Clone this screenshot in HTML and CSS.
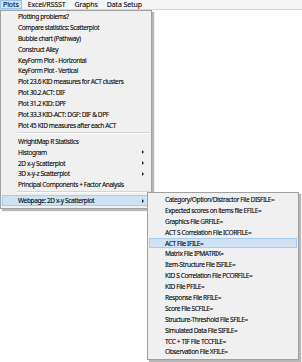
FILE: index.html
```html
<!DOCTYPE html>
<html>
<head>
<meta charset="utf-8">
<link rel="stylesheet" href="styles.css">
</head>
<body>
<div class="menubar">
  <span class="top active">Plots</span>
  <span class="top">Excel/RSSST</span>
  <span class="top">Graphs</span>
  <span class="top">Data Setup</span>
</div>
<div class="menu main">
  <div class="item">Plotting problems?</div>
  <div class="item">Compare statistics: Scatterplot</div>
  <div class="item">Bubble chart (Pathway)</div>
  <div class="item">Construct Alley</div>
  <div class="item">KeyForm Plot - Horizontal</div>
  <div class="item">KeyForm Plot - Vertical</div>
  <div class="item">Plot 23.6 KID measures for ACT clusters</div>
  <div class="item">Plot 30.2 ACT: DIF</div>
  <div class="item">Plot 31.2 KID: DPF</div>
  <div class="item">Plot 33.3 KID-ACT: DGF: DIF &amp; DPF</div>
  <div class="item">Plot 45 KID measures after each ACT</div>
  <div class="sep"></div>
  <div class="item">WrightMap R Statistics</div>
  <div class="item sub">Histogram</div>
  <div class="item sub">2D x-y Scatterplot</div>
  <div class="item sub">3D x-y-z Scatterplot</div>
  <div class="item">Principal Components + Factor Analysis</div>
  <div class="sep"></div>
  <div class="item sub hl">Webpage: 2D x-y Scatterplot</div>
</div>
<div class="menu submenu">
  <div class="item">Category/Option/Distractor File DISFILE=</div>
  <div class="item">Expected scores on items file EFILE=</div>
  <div class="item">Graphics File GRFILE=</div>
  <div class="item">ACT S Correlation File ICORFILE=</div>
  <div class="item hl">ACT File IFILE=</div>
  <div class="item">Matrix File IPMATRIX=</div>
  <div class="item">Item-Structure File ISFILE=</div>
  <div class="item">KID S Correlation File PCORFILE=</div>
  <div class="item">KID File PFILE=</div>
  <div class="item">Response File RFILE=</div>
  <div class="item">Score File SCFILE=</div>
  <div class="item">Structure-Threshold File SFILE=</div>
  <div class="item">Simulated Data File SIFILE=</div>
  <div class="item">TCC + TIF File TCCFILE=</div>
  <div class="item">Observation File XFILE=</div>
</div>
</body>
</html>
```
FILE: styles.css
```css
html, body {
  margin: 0;
  padding: 0;
  background: #ffffff;
}
body {
  font-family: "Noto Sans", "Open Sans", sans-serif;
  font-size: 6.6px;
  letter-spacing: -0.42px;
  color: #000;
  width: 302px;
  height: 362px;
  position: relative;
  overflow: hidden;
  -webkit-text-stroke: 0.08px #000;
}
.menubar {
  height: 9px;
  background: #f4f5f7;
  border-bottom: 1px solid #d4d4d4;
  display: flex;
  align-items: stretch;
  font-size: 7px;
  letter-spacing: -0.1px;
}
.top {
  display: flex;
  align-items: center;
  padding: 0 2px;
  margin-right: 3px;
  border: 1px solid transparent;
  line-height: 1;
}
.top.active {
  background: #cce4f7;
  border-color: #99c4ea;
}
.menu {
  position: absolute;
  background: #f0f0f0;
  border: 1px solid #a0a0a0;
  box-shadow: 2px 2px 1px rgba(0, 0, 0, 0.28);
  box-sizing: border-box;
}
.main {
  left: 0;
  top: 10px;
  width: 152px;
  padding: 0 1px 2px 1px;
}
.submenu {
  left: 147px;
  top: 192px;
  width: 152px;
  padding: 1px 1px 2px 1px;
}
.item {
  height: 10.9px;
  padding-left: 15px;
  display: flex;
  align-items: center;
  position: relative;
  white-space: nowrap;
  border: 1px solid transparent;
  box-sizing: border-box;
}
.item.hl {
  background: #cde2f5;
  border-color: #a9cbec;
}
.item.sub::after {
  content: "";
  position: absolute;
  right: 5px;
  top: 50%;
  margin-top: -2px;
  border-left: 2px solid #222;
  border-top: 2px solid transparent;
  border-bottom: 2px solid transparent;
}
.sep {
  height: 1px;
  background: #d5d5d5;
  border-bottom: 1px solid #fbfbfb;
  margin: 1px 0 2px 15px;
}
```
